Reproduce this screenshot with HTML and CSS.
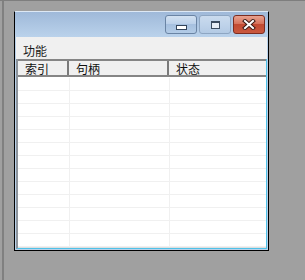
FILE: index.html
```html
<!DOCTYPE html>
<html lang="zh-CN">
<head>
    <meta charset="UTF-8">
    <title>功能</title>
    <link rel="stylesheet" href="styles.css">
</head>
<body>
    <div class="screen">
        <div class="area">
            <div class="window">
                <div class="titlebar">
                    <div class="cap-btn btn-min"><span class="min-bar"></span></div>
                    <div class="cap-btn btn-max"><span class="max-box"></span></div>
                    <div class="cap-btn btn-close">
                        <svg width="14" height="11" viewBox="0 0 14 11">
                            <path d="M3 2 L11 9 M11 2 L3 9" stroke="#3a1a14" stroke-width="4" stroke-linecap="square"/>
                            <path d="M3 2 L11 9 M11 2 L3 9" stroke="#fff" stroke-width="2" stroke-linecap="square"/>
                        </svg>
                    </div>
                </div>
                <div class="client">
                    <div class="menubar"><span class="menu-item">功能</span></div>
                    <div class="list">
                        <div class="list-head">
                            <div class="hcell col-a">索引</div>
                            <div class="hcell col-b">句柄</div>
                            <div class="hcell col-c">状态</div>
                        </div>
                        <div class="list-body" id="rows"></div>
                    </div>
                </div>
            </div>
        </div>
    </div>

    <script>
        const rows = document.getElementById('rows');
        for (let i = 0; i < 14; i++) {
            const row = document.createElement('div');
            row.className = 'row';
            row.innerHTML = '<div class="cell col-a"></div><div class="cell col-b"></div><div class="cell col-c"></div>';
            rows.appendChild(row);
        }
    </script>
</body>
</html>
```

FILE: styles.css
```css
body {
    margin: 0;
    background: #a0a0a0;
    font-family: "Noto Sans CJK SC", "Noto Sans", sans-serif;
    font-size: 12px;
    color: #111;
}

.screen {
    height: 279px;
    border-top: 1px solid #7e7e7e;
    padding-left: 2px;
    overflow: hidden;
}

.area {
    height: 100%;
    border-left: 2px solid #808080;
    padding: 10px 0 0 10px;
}

.window {
    width: 253px;
    height: 238px;
    border: 1px solid #000;
    border-top-color: #dde8f4;
    background: #b9d1ea;
    display: flex;
    flex-direction: column;
}

.titlebar {
    height: 25px;
    flex: none;
    box-sizing: border-box;
    padding: 3px 3px 0 0;
    display: flex;
    justify-content: flex-end;
    gap: 2px;
    background: linear-gradient(#9fb9d9, #bad2eb);
}

.cap-btn {
    width: 32px;
    height: 19px;
    box-sizing: border-box;
    border: 1px solid #6a84a4;
    border-radius: 3px;
    background: linear-gradient(#d2e1f1 0%, #bcd1ea 45%, #a6c0df 50%, #b2cbe6 100%);
    display: flex;
    align-items: center;
    justify-content: center;
}

.btn-max {
    border-color: #8ea6c2;
    background: linear-gradient(#cadbee 0%, #bfd3ea 50%, #b3cae4 100%);
}

.btn-close {
    border-color: #7c2c20;
    background: linear-gradient(#e8a290 0%, #d7735c 45%, #c24a32 50%, #c9583e 100%);
}

.min-bar {
    width: 9px;
    height: 3px;
    margin-top: 6px;
    background: #fff;
    border: 1px solid #33445a;
}

.max-box {
    width: 7px;
    height: 5px;
    border: 1px solid #3c4c60;
    border-top-width: 2px;
    background: #e8eef6;
}

.client {
    flex: 1;
    min-height: 0;
    margin: 0 1px 1px 1px;
    display: flex;
    flex-direction: column;
}

.menubar {
    height: 22px;
    flex: none;
    box-sizing: border-box;
    background: #f0f0f0;
    padding: 6px 0 0 7px;
    line-height: 16px;
}

.menu-item {
    color: #1a1a1a;
}

.list {
    flex: 1;
    min-height: 0;
    background: #fff;
    border-left: 2px solid #8d949c;
    border-right: 1px solid #4fc2e8;
    border-bottom: 1px solid #4fc2e8;
    display: flex;
    flex-direction: column;
    overflow: hidden;
}

.list-head {
    height: 18px;
    flex: none;
    box-sizing: border-box;
    display: flex;
    background: #f0f0f0;
    border-top: 2px solid #858585;
    border-bottom: 2px solid #858585;
}

.hcell {
    box-sizing: border-box;
    line-height: 15px;
    padding-left: 7px;
    border-right: 2px solid #7a7a7a;
}

.hcell.col-c {
    border-right: none;
}

.col-a {
    width: 51px;
}

.col-b {
    width: 100px;
}

.col-c {
    flex: 1;
}

.list-body {
    flex: 1;
    min-height: 0;
    padding-top: 1px;
    border-bottom: 1px solid #e0e0e0;
    overflow: hidden;
}

.row {
    height: 13px;
    box-sizing: border-box;
    display: flex;
    border-bottom: 1px solid #f0f0f0;
}

.cell {
    box-sizing: border-box;
    border-right: 1px solid #f0f0f0;
}

.cell.col-a {
    width: 52px;
}

.cell.col-c {
    border-right: none;
}
```
